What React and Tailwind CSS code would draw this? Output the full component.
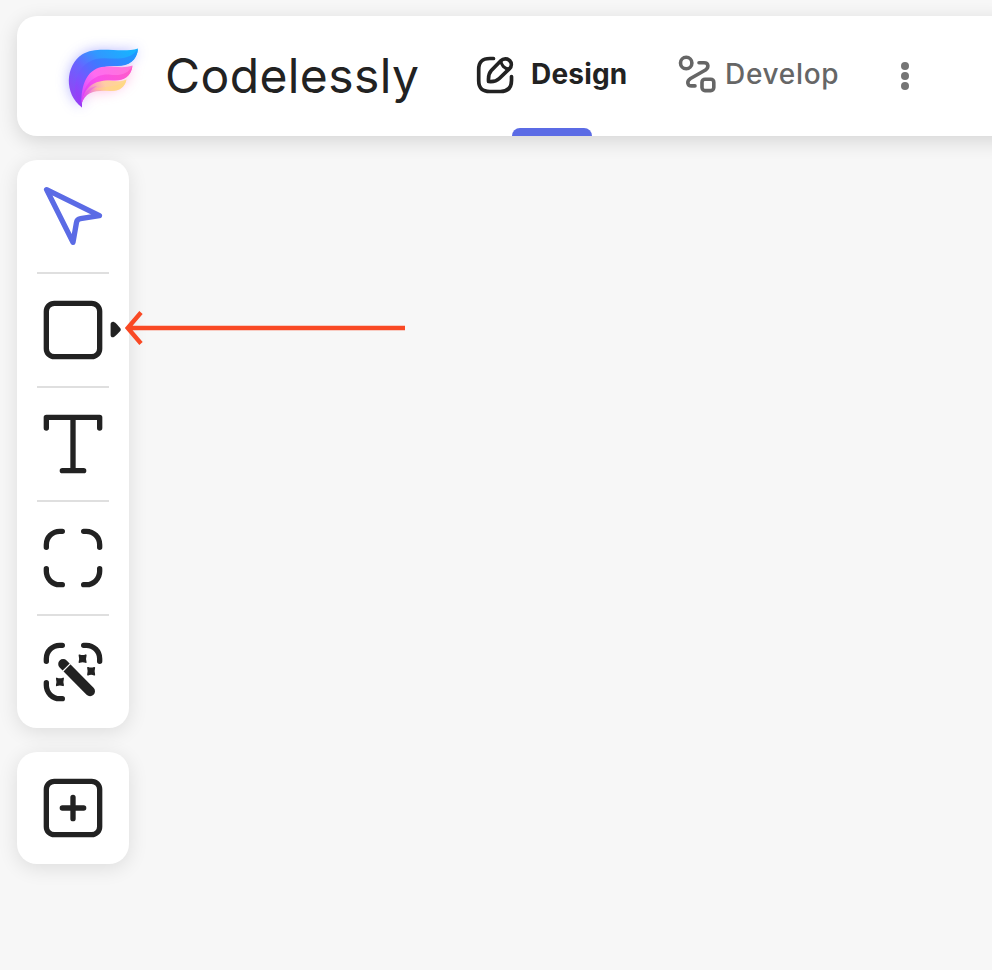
function Logo() {
  return (
    <svg className="h-[95px] w-[110px] shrink-0 overflow-visible" viewBox="50 29 110 95">
      <defs>
        <linearGradient id="blue" gradientUnits="userSpaceOnUse" x1="128" y1="48" x2="76" y2="102">
          <stop offset="0" stopColor="#18b2ff" />
          <stop offset="0.35" stopColor="#3198ff" />
          <stop offset="0.62" stopColor="#6764ff" />
          <stop offset="1" stopColor="#9344f4" />
        </linearGradient>
        <linearGradient id="deep" gradientUnits="userSpaceOnUse" x1="136" y1="52" x2="78" y2="106">
          <stop offset="0" stopColor="#1c9aff" />
          <stop offset="0.45" stopColor="#3f79ff" />
          <stop offset="0.75" stopColor="#7a54ff" />
          <stop offset="1" stopColor="#a236f4" />
        </linearGradient>
        <linearGradient id="pink" gradientUnits="userSpaceOnUse" x1="130" y1="66" x2="82" y2="98">
          <stop offset="0" stopColor="#ff74d8" />
          <stop offset="0.6" stopColor="#ff6cf0" />
          <stop offset="1" stopColor="#d548ff" />
        </linearGradient>
        <linearGradient id="rose" gradientUnits="userSpaceOnUse" x1="130" y1="66" x2="82" y2="100">
          <stop offset="0" stopColor="#ff5cc8" />
          <stop offset="0.6" stopColor="#f950ea" />
          <stop offset="1" stopColor="#d73cf8" />
        </linearGradient>
        <linearGradient id="sand" gradientUnits="userSpaceOnUse" x1="126" y1="82" x2="83" y2="98">
          <stop offset="0" stopColor="#ffd98c" />
          <stop offset="0.45" stopColor="#ffcda4" />
          <stop offset="0.7" stopColor="#f9a0bc" />
          <stop offset="1" stopColor="#e04cf0" />
        </linearGradient>
        <filter id="glow" x="-50%" y="-50%" width="200%" height="200%">
          <feGaussianBlur stdDeviation="6.5" />
        </filter>
      </defs>
      <g filter="url(#glow)" opacity="0.5">
        <path d="M81 107C64 91 66 66 82 55C99 44 119 55 137 49C134 62 123 66 114 66C94 66 82 80 81 107Z" fill="#6f70ff" />
        <path d="M82 104C85 84 104 72 131 67C129 84 115 92 100 91C91 91 84 96 82 104Z" fill="#ff78c8" />
      </g>
      <path d="M82 107.500C64 94 65 66 82 54.500C98 44.500 120 54 138 48.500C137 61 127 66.500 115 65.500C94 63.500 82 82 82 107.500Z" fill="url(#blue)" />
      <path d="M82 107.500C69 92 75 64 96 59C109 56 127 64 138 49C137 61 128 66.500 116 66C93 64.500 82 82 82 107.500Z" fill="url(#deep)" />
      <path d="M81.500 103C81 79 91 66.500 107 66.500C116 66.500 124 68.500 132.500 65.500C131 76 124 80 115 80C99 80 85 85 81.500 103Z" fill="url(#pink)" />
      <path d="M81.500 103C83 84 94 74 109 74.500C119 76 127 75 132.500 66C131 76.500 124 80.500 115 80.500C99 79.500 85 86 81.500 103Z" fill="url(#rose)" />
      <path d="M81.500 104C84 86 95 80.500 108 80.500C115 81.500 121 82 126.500 79.500C125 87.500 119 91.500 110 91C98 90 85 91 81.500 104Z" fill="url(#sand)" />
      <path d="M81.500 104C84 91 90 87 97 86C92 89 85 94 81.500 104Z" fill="#e24df0" opacity="0.4" />
      <path d="M94 89C104 86 116 88 126 81C124 88 118 91.500 110 91C105 91 99 90 94 89Z" fill="#ffdc74" opacity="0.4" />
    </svg>
  );
}

function DesignIcon() {
  return (
    <svg className="size-10 shrink-0" viewBox="475 54.5 40 40" fill="none" stroke="currentColor" strokeWidth="3.7" strokeLinecap="round" strokeLinejoin="round">
      <path d="M493.500 58H490C482 58 478.700 61.500 478.700 69V80C478.700 87.500 482 91 490 91H500.500C508 91 511.500 87.500 511.500 80V76" />
      <path d="M500.800 60.300L491.300 70C488.700 72.700 488.200 76.500 488.600 81C493 81.400 496.700 80.600 499.300 78L509.500 68.200C511.800 65.800 511.900 62.400 509.700 60.100C507.300 57.700 503.300 57.800 500.800 60.300Z" />
      <path d="M501 60.500C501 64.500 504.300 68.200 508.700 68.500" strokeWidth="3" />
    </svg>
  );
}

function DevelopIcon() {
  return (
    <svg className="size-10 shrink-0" viewBox="677 54 40 40" fill="none" stroke="currentColor" strokeWidth="3.6" strokeLinecap="round" strokeLinejoin="round">
      <circle cx="686.200" cy="63" r="5.700" />
      <rect x="702" y="79.200" width="11.800" height="11.400" rx="3" />
      <path d="M699 62.700H704C709 62.700 708.800 67.600 705.500 70L690.500 78.500C686.300 81.200 687.300 85.900 691.500 85.900H695" />
    </svg>
  );
}

function ToolIcon({ children }) {
  return (
    <svg className="size-16" viewBox="0 0 24 24" fill="none" stroke="currentColor" strokeWidth="2" strokeLinecap="round" strokeLinejoin="round">
      {children}
    </svg>
  );
}

function Tool({ children, label }) {
  return (
    <button aria-label={label} className="relative flex size-28 shrink-0 items-center justify-center">
      {children}
    </button>
  );
}

function Divider() {
  return <div className="mx-5 h-0.5 shrink-0 bg-[#dfdfdf]" />;
}

const star = "M-1.2-1.3Q0-.8 1.2-1.3Q.8 0 1.2 1.3Q0 .8-1.2 1.3Q-.8 0-1.2-1.3Z";

export default function App() {
  return (
    <div className="relative h-[970px] w-[992px] overflow-hidden bg-[#f7f7f7] pl-[17px] pt-4 text-[#222]">
      <header className="flex h-[120px] w-[1010px] items-center rounded-[20px] bg-white pl-[33px] shadow-[0_5px_20px_rgba(0,0,0,0.14)]">
        <Logo />
        <div className="ml-[5px] w-[261px] whitespace-nowrap font-['Inter',sans-serif] text-[48px] font-normal leading-[60px] tracking-[0.4px]">Codelessly</div>
        <nav className="flex h-full">
          <div className="relative ml-[49px] flex w-[154px] items-center pb-[3px]">
            <DesignIcon />
            <span className="ml-4 pb-0.5 font-['Inter',sans-serif] text-[28px] font-bold leading-10 tracking-[0.2px]">Design</span>
            <span className="absolute bottom-0 left-[37px] h-2 w-20 rounded-t-lg bg-[#5b6be5]" />
          </div>
          <div className="ml-12 flex w-[164px] items-center pb-1 text-[#666]">
            <DevelopIcon />
            <span className="ml-2 pb-px font-['Inter',sans-serif] text-[28px] font-[550] leading-10 tracking-[0.7px]">Develop</span>
          </div>
        </nav>
        <div className="ml-[60px] flex flex-col gap-[2.5px] text-[#757575]">
          <i className="size-[7.5px] rounded-full bg-current" />
          <i className="size-[7.5px] rounded-full bg-current" />
          <i className="size-[7.5px] rounded-full bg-current" />
        </div>
      </header>

      <aside className="mt-6 flex w-28 flex-col rounded-[20px] bg-white shadow-[0_4px_20px_rgba(0,0,0,0.11)]">
        <Tool label="Select">
          <span className="text-[#5b6be5]">
            <ToolIcon><path d="M2.100 2.100L21.900 11.900L14.800 13Q13.500 13.200 13.300 14.500L12 21.900Z" /></ToolIcon>
          </span>
        </Tool>
        <Divider />
        <Tool label="Shape">
          <ToolIcon><rect x="2" y="2" width="20" height="20" rx="3" /></ToolIcon>
          <svg className="absolute left-[93px] top-[47px] h-[18px] w-3" viewBox="110 321 12 18">
            <path d="M113.500 321.800C111.800 321.600 110.600 322.600 110.600 324.300V335C110.600 337 112.300 337.900 114 337C116 335.700 118.300 333.300 120.500 330.800Q121.100 329.600 120.500 328.600C118.300 326.200 116 322.700 113.500 321.800Z" fill="currentColor" />
          </svg>
        </Tool>
        <Divider />
        <Tool label="Text">
          <ToolIcon><path d="M2 6V2H22V6M12 2V22M8 22H16" /></ToolIcon>
        </Tool>
        <Divider />
        <Tool label="Frame">
          <ToolIcon><path d="M2 8V7A5 5 0 0 1 7 2H8M16 2H17A5 5 0 0 1 22 7V8M22 16V17A5 5 0 0 1 17 22H16M8 22H7A5 5 0 0 1 2 17V16" /></ToolIcon>
        </Tool>
        <Divider />
        <Tool label="Generate">
          <ToolIcon>
            <path d="M2 8V7A5 5 0 0 1 7 2H8M16 2H17A5 5 0 0 1 22 7V8M8 22H7A5 5 0 0 1 2 17V16" />
            <path d="M8.300 9L18.400 19.200" strokeWidth="3.700" />
            <path d="M7.800 12.100L11.500 8.400" stroke="white" strokeWidth="0.450" strokeLinecap="butt" />
            <g fill="currentColor" strokeWidth="0.600">
              <path d={star} transform="translate(15.600 7)" />
              <path d={star} transform="translate(18.800 11.700)" />
              <path d={star} transform="translate(7.100 15.700)" />
            </g>
          </ToolIcon>
        </Tool>
      </aside>

      <div className="mt-6 size-28 rounded-[20px] bg-white shadow-[0_4px_20px_rgba(0,0,0,0.11)]">
        <Tool label="Add">
          <ToolIcon>
            <rect x="2" y="2" width="20" height="20" rx="3" />
            <path d="M12 8V16M8 12H16" />
          </ToolIcon>
        </Tool>
      </div>

      <svg className="absolute left-[120px] top-[308px] h-10 w-[290px]" viewBox="120 308 290 40" fill="none" stroke="#f94924" strokeWidth="4.4">
        <path d="M128 328H405M141 312.500L127.700 328L141 343.500" />
      </svg>
    </div>
  );
}
